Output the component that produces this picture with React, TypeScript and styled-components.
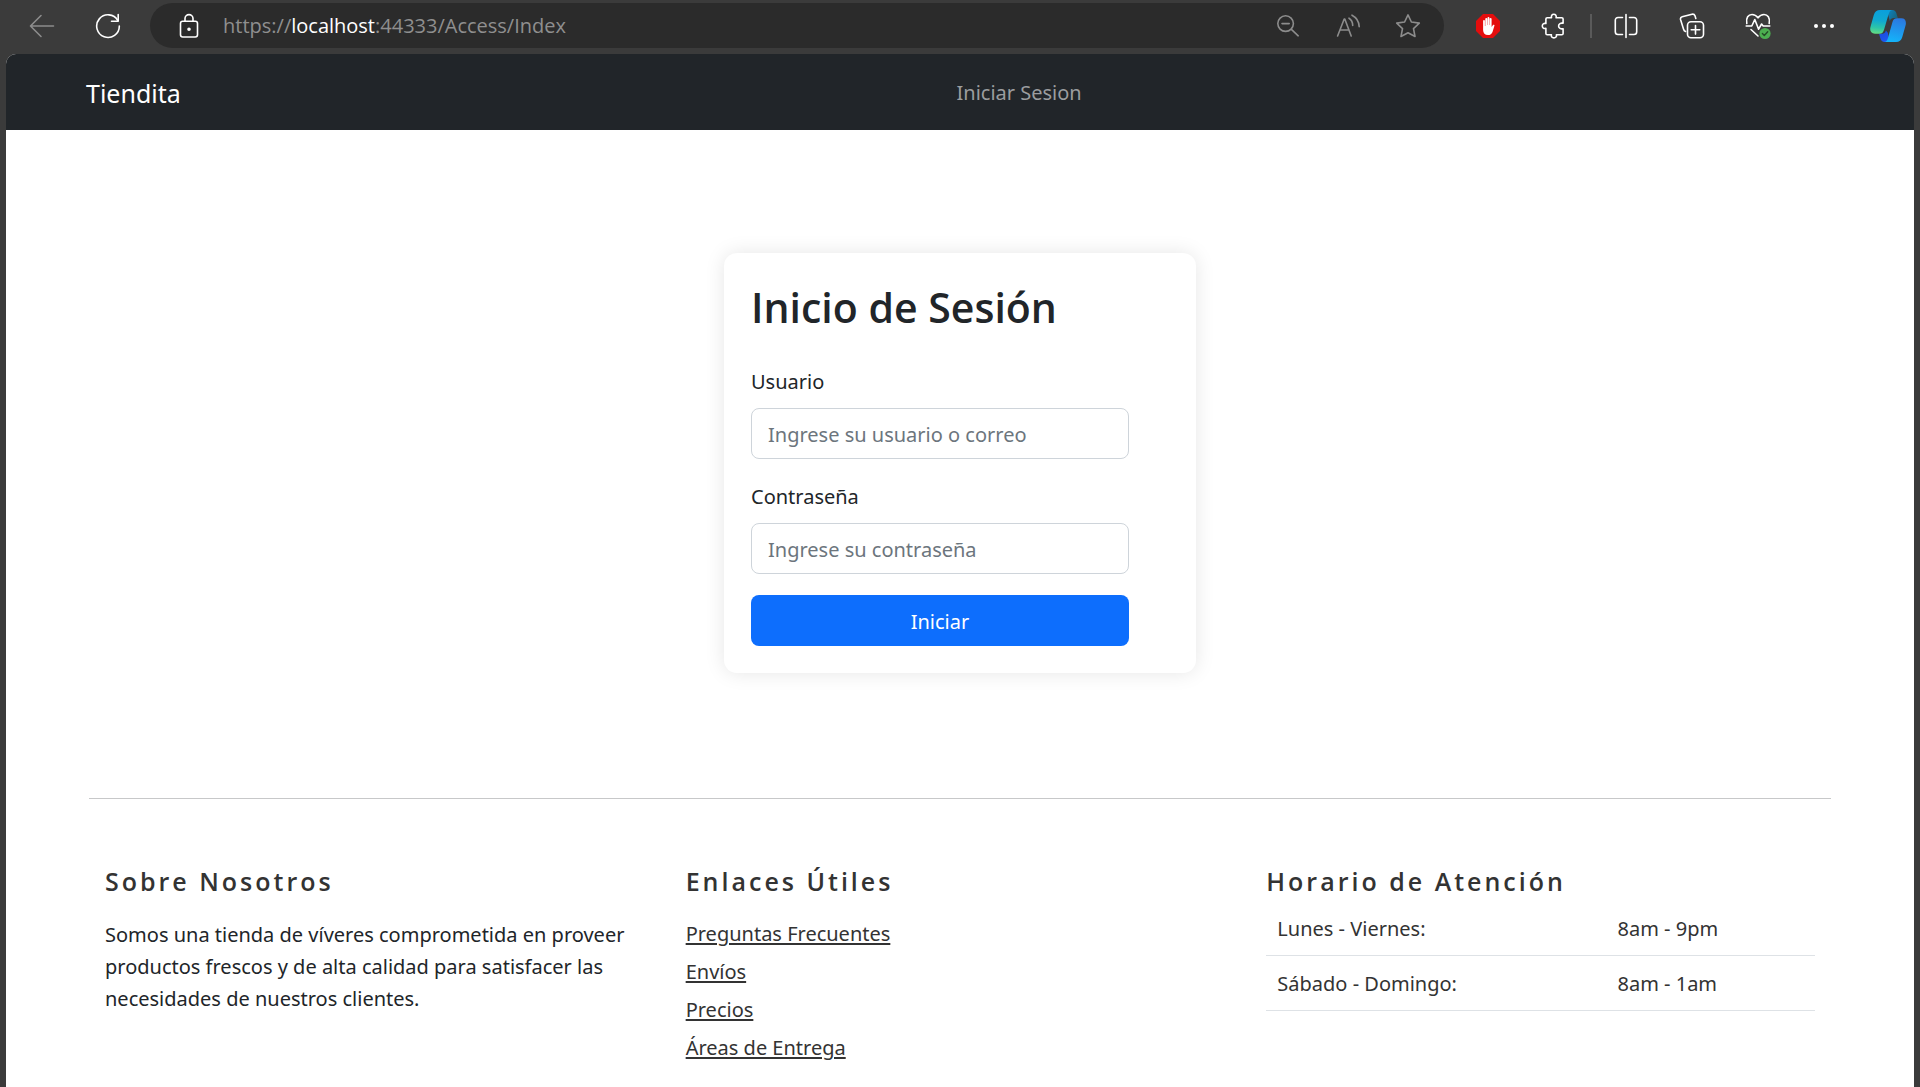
import React from "react";
import styled, { createGlobalStyle } from "styled-components";

const GlobalStyle = createGlobalStyle`
  *, *::before, *::after { box-sizing: border-box; }
  body {
    margin: 0;
    background: #3b3b3b;
    color: #212529;
    font-family: "Noto Sans", "Open Sans", sans-serif;
    font-size: 20px;
    line-height: 32px;
  }
  button, input { font: inherit; }
`;

const Window = styled.div`
  display: flex;
  flex-direction: column;
  min-height: 100vh;
`;

/* Browser toolbar */

const Toolbar = styled.header`
  display: flex;
  align-items: center;
  height: 54px;
  padding: 0 1px 3px 9px;
`;

const ToolButton = styled.button<{ $width?: number; $dim?: boolean }>`
  display: flex;
  align-items: center;
  justify-content: center;
  flex: none;
  width: ${(p) => p.$width ?? 66}px;
  height: 44px;
  padding: 0;
  border: 0;
  background: none;
  color: ${(p) => (p.$dim ? "#8c8c8c" : "#ffffff")};
`;

const AddressBar = styled.div`
  display: flex;
  align-items: center;
  flex: 1;
  min-width: 0;
  height: 45px;
  margin: 0 11px 0 9px;
  padding: 0 6px 0 9px;
  border-radius: 23px;
  background: #2b2b2b;
`;

const Url = styled.div`
  flex: 1;
  min-width: 0;
  padding-left: 4px;
  overflow: hidden;
  white-space: nowrap;
  color: #8f8f8f;
  font-family: "Open Sans", "Noto Sans", sans-serif;

  strong {
    color: #ffffff;
    font-weight: 400;
  }
`;

const Divider = styled.span`
  flex: none;
  width: 2px;
  height: 24px;
  margin: 0 1px 0 3px;
  background: #5a5a5a;
`;

const Icon = styled.svg`
  display: block;
  fill: none;
  stroke: currentColor;
  stroke-width: 1.6;
  stroke-linecap: round;
  stroke-linejoin: round;
`;

/* Web page */

const Page = styled.div`
  flex: 1;
  margin: 0 6px;
  overflow: hidden;
  border-radius: 10px 10px 0 0;
  background: #ffffff;
`;

const Navbar = styled.nav`
  display: grid;
  grid-template-columns: 1fr 1fr;
  align-items: center;
  height: 76px;
  padding: 2px 87px 0 80px;
  background: #212529;
`;

const Brand = styled.a`
  color: #ffffff;
  font-size: 25px;
  text-decoration: none;
`;

const NavLink = styled.a`
  color: #9b9d9f;
  text-decoration: none;
`;

const Main = styled.main`
  display: flex;
  justify-content: center;
  padding: 123px 16px 125px;
`;

const Card = styled.section`
  width: 472px;
  padding: 27px;
  border-radius: 13px;
  box-shadow: 0 0 20px rgba(0, 0, 0, 0.1);
`;

const Title = styled.h2`
  margin: 0 0 30px;
  font-family: "Open Sans", "Noto Sans", sans-serif;
  font-size: 41px;
  font-weight: 600;
  line-height: 55px;
`;

const Form = styled.form`
  display: flex;
  flex-direction: column;
  gap: 21px;
  width: 378px;
`;

const Field = styled.div`
  display: flex;
  flex-direction: column;
  gap: 10px;
  padding-top: 1px;
`;

const Input = styled.input`
  width: 100%;
  height: 51px;
  padding: 1px 16px 0;
  border: 1px solid #ced4da;
  border-radius: 8px;
  background: #ffffff;
  color: #212529;

  &::placeholder {
    color: #6c757d;
    opacity: 1;
  }
`;

const Submit = styled.button`
  height: 51px;
  padding: 2px 16px 0;
  border: 0;
  border-radius: 8px;
  background: #0d6efd;
  color: #ffffff;
`;

const Footer = styled.footer`
  display: grid;
  grid-template-columns: repeat(3, 1fr);
  margin: 0 83px;
  padding: 66px 0 16px;
  border-top: 1px solid #c7c8c9;
`;

const Column = styled.section`
  padding: 0 16px;
`;

const Heading = styled.h5`
  margin: 0 0 3px;
  color: #333333;
  font-family: "Open Sans", "Noto Sans", sans-serif;
  font-size: 25px;
  font-weight: 600;
  line-height: 32px;
  letter-spacing: 3px;
`;

const Text = styled.p`
  margin: 0;
  padding-top: 19px;
`;

const Links = styled.ul`
  display: flex;
  flex-direction: column;
  align-items: flex-start;
  gap: 6px;
  margin: 0;
  padding: 18px 0 0;
  list-style: none;

  a {
    color: #333333;
    text-decoration-thickness: 2px;
    text-underline-offset: 2px;
  }
`;

const Schedule = styled.table`
  width: 100%;
  border-collapse: collapse;
  color: #333333;

  td {
    height: 55px;
    padding: 3px 11px 0;
    border-bottom: 1px solid #dee2e6;
  }

  td:first-child {
    width: 62%;
  }
`;

const links = ["Preguntas Frecuentes", "Envíos", "Precios", "Áreas de Entrega"];

const hours = [
  ["Lunes - Viernes:", "8am - 9pm"],
  ["Sábado - Domingo:", "8am - 1am"],
];

function BackIcon() {
  return (
    <Icon width="26" height="26" viewBox="0 0 26 26">
      <path d="M24.5 13H1.5M12 2.5 1.5 13 12 23.5" />
    </Icon>
  );
}

function ReloadIcon() {
  return (
    <Icon width="26" height="26" viewBox="0 0 26 26" strokeWidth="1.8">
      <path d="M22.8 7.5A11.3 11.3 0 1 0 24.3 13" />
      <path d="M23.2 1.5v6.7h-6.7" />
    </Icon>
  );
}

function LockIcon() {
  return (
    <Icon width="24" height="26" viewBox="0 0 24 26">
      <rect x="3.5" y="8.2" width="17" height="15.8" rx="2.2" />
      <path d="M8 8V5.6a4 4 0 0 1 8 0V8" />
      <circle cx="12" cy="16.2" r="1" fill="currentColor" />
    </Icon>
  );
}

function ZoomOutIcon() {
  return (
    <Icon width="24" height="24" viewBox="0 0 24 24">
      <circle cx="9.6" cy="9.6" r="7.8" />
      <path d="m15.4 15.4 6.8 6.4M6 9.6h7.2" />
    </Icon>
  );
}

function ReadAloudIcon() {
  return (
    <Icon width="24" height="24" viewBox="0 0 24 24">
      <path d="m1.6 22 6.6-17h.6l6.4 17M4 16h9" />
      <path d="M13 4.2c2.600 1.600 3.700 3.900 3.700 7.200M16 1.200c4.600 2.400 7 6.400 7.200 11.400" />
    </Icon>
  );
}

function StarIcon() {
  return (
    <Icon width="26" height="26" viewBox="0 0 26 26">
      <path d="m13 1.9 3.4 7.1 7.9 1.1-5.8 5.5 1.5 7.9-7-3.8-7 3.8 1.5-7.9-5.8-5.5 7.9-1.1z" />
    </Icon>
  );
}

function BlockerIcon() {
  return (
    <Icon width="24" height="24" viewBox="0 0 24 24" style={{ stroke: "none" }}>
      <path d="M7 0h10l7 7v10l-7 7H7l-7-7V7z" fill="#e40d0d" />
      <path
        fill="#ffffff"
        d="M7.1 7a.9.9 0 0 1 1.8 0v5h.4V4.900a.95.95 0 0 1 1.900 0V11h.3V3.900a.95.95 0 0 1 1.900 0V11h.3V5a.95.95 0 0 1 1.900 0v8l1.400-1.900c.5-.7 1.600-.3 1.500.5l-2 6.300c-.7 2-2.200 3.100-4.500 3.100-3.100 0-4.900-1.900-4.900-5z"
      />
    </Icon>
  );
}

function PuzzleIcon() {
  return (
    <Icon width="26" height="26" viewBox="0 0 26 26" strokeWidth="1.8">
      <path d="M6.200 4.700h4.300c-.5-2 .5-3.400 2.300-3.400s2.800 1.400 2.300 3.400h5.700a1.300 1.300 0 0 1 1.300 1.300v4.300c-2.300-.7-4.500.6-4.500 2.700s2.200 3.400 4.500 2.700v4.700a1.300 1.300 0 0 1-1.300 1.300h-5.400c.5 2-.7 3.200-2.500 3.200s-3-1.200-2.500-3.200H6.200a1.300 1.300 0 0 1-1.300-1.300v-5c-2.200.5-3.600-.6-3.600-2.400s1.400-3 3.600-2.500V6a1.300 1.300 0 0 1 1.300-1.300z" />
    </Icon>
  );
}

function SplitIcon() {
  return (
    <Icon width="26" height="26" viewBox="0 0 26 26">
      <path d="M9.500 4.500H5A2.700 2.700 0 0 0 2.300 7.200v11.600A2.700 2.700 0 0 0 5 21.500h4.500M16.500 4.500H21a2.700 2.700 0 0 1 2.700 2.700v11.600a2.700 2.700 0 0 1-2.700 2.700h-4.500M13 1.500v23" />
    </Icon>
  );
}

function CollectionsIcon() {
  return (
    <Icon width="26" height="26" viewBox="0 0 26 26">
      <rect x="8.500" y="8.800" width="16" height="16" rx="3.500" />
      <path d="M16.500 12.500v8.600M12.200 16.800h8.600" />
      <path d="M6.500 18.500c-1.200-.5-1.700-1.300-2-2.500L1.600 6.800C1.200 5.300 1.800 4.200 3.200 3.800L13 1.200c1.500-.3 2.500.2 3 1.600l.8 2.600" />
    </Icon>
  );
}

function HealthIcon() {
  return (
    <Icon width="26" height="28" viewBox="0 0 26 28">
      <path d="M1.800 11.500C.6 5.600 3.500 2.500 7 2.500c2.800 0 4.500 1.300 6 3.300 1.500-2 3.200-3.300 6-3.300 3.500 0 6.400 3.100 5.200 9" />
      <path d="M1.200 14h5.600l3-6.500 3.800 9.700 3-5.200 1.600 2h6.600M6 17.500l7 6.500" />
      <circle cx="20" cy="21.500" r="5.600" fill="#4caf50" stroke="none" />
      <path d="m17.400 21.600 1.900 1.900 3.400-3.800" stroke="#244d26" strokeWidth="1.400" />
    </Icon>
  );
}

function MoreIcon() {
  return (
    <Icon width="22" height="6" viewBox="0 0 22 6" style={{ stroke: "none" }}>
      <g fill="currentColor">
        <circle cx="3" cy="3" r="2" />
        <circle cx="11" cy="3" r="2" />
        <circle cx="19" cy="3" r="2" />
      </g>
    </Icon>
  );
}

function CopilotIcon() {
  return (
    <Icon width="36" height="32" viewBox="0 0 36 32" style={{ stroke: "none" }}>
      <defs>
        <linearGradient id="cpLeft" x1="0.5" y1="0" x2="0.4" y2="1">
          <stop offset="0" stopColor="#0a9fdc" />
          <stop offset="0.45" stopColor="#10a9d0" />
          <stop offset="0.75" stopColor="#2cc4a8" />
          <stop offset="1" stopColor="#62dc84" />
        </linearGradient>
        <linearGradient id="cpRight" x1="0.6" y1="0" x2="0.4" y2="1">
          <stop offset="0" stopColor="#2b78e0" />
          <stop offset="1" stopColor="#14b4fa" />
        </linearGradient>
        <linearGradient id="cpTop" x1="0" y1="0" x2="1" y2="0.5">
          <stop offset="0" stopColor="#0a86c8" />
          <stop offset="1" stopColor="#17647f" />
        </linearGradient>
        <linearGradient id="cpBottom" x1="0" y1="0" x2="0.5" y2="1">
          <stop offset="0" stopColor="#1a4bd8" />
          <stop offset="1" stopColor="#1f57f0" />
        </linearGradient>
      </defs>
      <path d="M17 0h5.500c2.200 0 3.300 1.300 3.900 3.200L27.800 8h-4c-2 0-3.300.8-4 3z" fill="url(#cpTop)" />
      <path d="M19 32h-4.500c-2.200 0-3.400-1.400-4-3.300L9 23.800h3c2.200 0 3.200-1 3.900-3.300L18 23z" fill="url(#cpBottom)" />
      <path d="M10 0h12c-2 .4-2.800 2.200-3.500 4.500l-4.400 15c-.8 2.700-1.900 4.300-4.600 4.300H5c-4.200 0-5.500-3.200-4.500-7L3.800 5C4.900 1.600 6.800 0 10 0z" fill="url(#cpLeft)" />
      <path d="M26 32H14.500c2.200-.4 3-2.300 3.600-4.500l4.300-15.200C23.100 9.800 24.300 8.300 27 8.300h4.200c4.200 0 5.300 3.200 4.400 7L32.300 27c-1 3.500-3 5-6.300 5z" fill="url(#cpRight)" />
    </Icon>
  );
}

export default function App() {
  return (
    <Window>
      <GlobalStyle />
      <Toolbar>
        <ToolButton $dim aria-label="Atrás"><BackIcon /></ToolButton>
        <ToolButton aria-label="Actualizar"><ReloadIcon /></ToolButton>
        <AddressBar>
          <ToolButton $width={60} aria-label="Información del sitio"><LockIcon /></ToolButton>
          <Url>https://<strong>localhost</strong>:44333/Access/Index</Url>
          <ToolButton $width={60} $dim aria-label="Alejar"><ZoomOutIcon /></ToolButton>
          <ToolButton $width={60} $dim aria-label="Leer en voz alta"><ReadAloudIcon /></ToolButton>
          <ToolButton $width={60} $dim aria-label="Favorito"><StarIcon /></ToolButton>
        </AddressBar>
        <ToolButton aria-label="Bloqueador"><BlockerIcon /></ToolButton>
        <ToolButton aria-label="Extensiones"><PuzzleIcon /></ToolButton>
        <Divider />
        <ToolButton aria-label="Pantalla dividida"><SplitIcon /></ToolButton>
        <ToolButton aria-label="Colecciones"><CollectionsIcon /></ToolButton>
        <ToolButton aria-label="Rendimiento"><HealthIcon /></ToolButton>
        <ToolButton aria-label="Más"><MoreIcon /></ToolButton>
        <ToolButton $width={62} aria-label="Copilot"><CopilotIcon /></ToolButton>
      </Toolbar>

      <Page>
        <Navbar>
          <Brand href="#">Tiendita</Brand>
          <NavLink href="#">Iniciar Sesion</NavLink>
        </Navbar>

        <Main>
          <Card>
            <Title>Inicio de Sesión</Title>
            <Form>
              <Field>
                <label htmlFor="usuario">Usuario</label>
                <Input id="usuario" type="text" placeholder="Ingrese su usuario o correo" />
              </Field>
              <Field>
                <label htmlFor="clave">Contraseña</label>
                <Input id="clave" type="password" placeholder="Ingrese su contraseña" />
              </Field>
              <Submit type="button">Iniciar</Submit>
            </Form>
          </Card>
        </Main>

        <Footer>
          <Column>
            <Heading>Sobre Nosotros</Heading>
            <Text>
              Somos una tienda de víveres comprometida en proveer productos frescos y de alta
              calidad para satisfacer las necesidades de nuestros clientes.
            </Text>
          </Column>
          <Column>
            <Heading>Enlaces Útiles</Heading>
            <Links>
              {links.map((name) => (
                <li key={name}><a href="#">{name}</a></li>
              ))}
            </Links>
          </Column>
          <Column>
            <Heading>Horario de Atención</Heading>
            <Schedule>
              <tbody>
                {hours.map(([days, time]) => (
                  <tr key={days}>
                    <td>{days}</td>
                    <td>{time}</td>
                  </tr>
                ))}
              </tbody>
            </Schedule>
          </Column>
        </Footer>
      </Page>
    </Window>
  );
}
